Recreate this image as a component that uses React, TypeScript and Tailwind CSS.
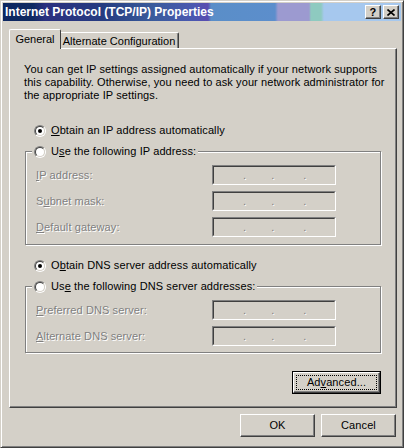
import type { ReactNode } from "react";

const Radio = ({ checked }: { checked?: boolean }) => (
  <span className="block w-[12px] h-[12px] shrink-0 rounded-full border border-t-[#808080] border-l-[#808080] border-r-white border-b-white">
    <span className="flex w-full h-full items-center justify-center rounded-full border border-t-[#404040] border-l-[#404040] border-r-[#d4d0c8] border-b-[#d4d0c8] bg-white">
      {checked && <span className="block w-[4px] h-[4px] rounded-full bg-black" />}
    </span>
  </span>
);

const RadioRow = ({ checked, children }: { checked?: boolean; children: ReactNode }) => (
  <div className="flex h-[13px] items-center gap-[5px]">
    <Radio checked={checked} />
    <span>{children}</span>
  </div>
);

const Field = () => (
  <div className="w-[124px] h-[20px] border border-t-[#808080] border-l-[#808080] border-r-white border-b-white">
    <div className="flex h-full items-center border border-t-[#404040] border-l-[#404040] border-r-[#d4d0c8] border-b-[#d4d0c8] bg-[#d4d0c8] text-[#808080] [text-shadow:1px_1px_0_#fff]">
      <span className="w-[29px]" />
      <span>.</span>
      <span className="w-[25px]" />
      <span>.</span>
      <span className="w-[29px]" />
      <span>.</span>
    </div>
  </div>
);

const FieldRow = ({ children }: { children: ReactNode }) => (
  <div className="flex h-[20px] items-center">
    <span className="w-[176px] text-[#808080] [text-shadow:1px_1px_0_#fff]">{children}</span>
    <Field />
  </div>
);

const GroupBox = ({ legend, children, pb }: { legend: ReactNode; children: ReactNode; pb: string }) => (
  <fieldset
    className={`ml-[15px] w-[356px] border border-[#808080] shadow-[inset_1px_1px_0_#fff,1px_1px_0_#fff] pt-[7px] ${pb}`}>
    <legend className="ml-[6px] px-[2px] bg-[#d4d0c8]">
      <RadioRow>{legend}</RadioRow>
    </legend>
    <div className="flex flex-col gap-[6px] pl-[10px]">{children}</div>
  </fieldset>
);

const Button = ({ children, isDefault }: { children: ReactNode; isDefault?: boolean }) => (
  <button
    className={`h-[23px] ${isDefault ? "w-[89px] border border-black" : "w-[75px]"} bg-[#d4d0c8] p-0`}>
    <span className="flex h-full w-full border border-t-white border-l-white border-r-[#404040] border-b-[#404040] shadow-[inset_-1px_-1px_0_#808080]">
      <span
        className={`flex flex-1 items-center justify-center ${
          isDefault ? "m-[2px] border border-dotted border-black" : ""
        }`}>
        {children}
      </span>
    </span>
  </button>
);

const TitleButton = ({ children }: { children: ReactNode }) => (
  <span className="flex w-[16px] h-[14px] items-center justify-center bg-[#d4d0c8] border border-t-white border-l-white border-r-[#404040] border-b-[#404040] shadow-[inset_-1px_-1px_0_#808080]">
    {children}
  </span>
);

export default function App() {
  return (
    <div className="w-[404px] h-[448px] flex flex-col bg-[#d4d0c8] border border-[#d4d0c8] border-r-[#404040] border-b-[#404040] shadow-[inset_1px_1px_0_#fff,inset_-1px_-1px_0_#808080] p-[2px] text-[11px] leading-[13px] tracking-[0.1px] text-black font-['Liberation_Sans',Arial,sans-serif] overflow-hidden">
      {/* title bar */}
      <div className="flex h-[18px] shrink-0 items-center justify-between pl-[2px] pr-[2px] bg-[linear-gradient(90deg,#0c2660_0px,#0f2a62_30px,#2b3080_42px,#263c80_100px,#3a5c9c_150px,#4a58b0_190px,#5a4cb0_205px,#5a8ec8_208px,#5c8ecc_272px,#9c9ad0_275px,#9c9ad0_306px,#8ecac0_308px,#8ecac0_318px,#a6c8ee_321px,#a6c8ee_100%)]">
        <span className="font-bold text-white text-[12px] tracking-normal">Internet Protocol (TCP/IP) Properties</span>
        <div className="flex gap-[2px]">
          <TitleButton>
            <span className="font-bold text-[11px] leading-none">?</span>
          </TitleButton>
          <TitleButton>
            <svg width="8" height="7" viewBox="0 0 8 7">
              <path d="M0.5 0.5 L7.5 6.5 M7.5 0.5 L0.5 6.5" stroke="#000" strokeWidth="1.6" />
            </svg>
          </TitleButton>
        </div>
      </div>

      {/* tabs */}
      <div className="mt-[8px] ml-[6px] flex h-[19px] items-end tracking-normal">
        <div className="relative z-10 -mb-px flex h-[20px] w-[52px] items-start justify-center pt-[3px] bg-[#d4d0c8] border-l border-t border-l-white border-t-white border-r border-r-[#404040] rounded-t-[2px]">
          General
        </div>
        <div className="flex h-[16px] w-[118px] items-start justify-center pt-[2px] pr-[1px] border-t border-t-white border-r border-r-[#404040] shadow-[inset_-1px_0_0_#808080] rounded-tr-[2px]">
          Alternate Configuration
        </div>
      </div>

      {/* panel */}
      <div className="ml-[6px] h-[360px] w-[388px] flex flex-col border border-t-white border-l-white border-r-[#404040] border-b-[#404040] shadow-[inset_-1px_-1px_0_#808080] pt-[14px]">
        <p className="pl-[14px]">
          You can get IP settings assigned automatically if your network supports
          <br />
          this capability. Otherwise, you need to ask your network administrator for
          <br />
          the appropriate IP settings.
        </p>

        <div className="mt-[22px] ml-[24px]">
          <RadioRow checked>
            <u>O</u>btain an IP address automatically
          </RadioRow>
        </div>

        <div className="mt-[8px]">
          <GroupBox
            pb="pb-[7px]"
            legend={
              <>
                U<u>s</u>e the following IP address:
              </>
            }>
            <FieldRow>
              <u>I</u>P address:
            </FieldRow>
            <FieldRow>
              S<u>u</u>bnet mask:
            </FieldRow>
            <FieldRow>
              <u>D</u>efault gateway:
            </FieldRow>
          </GroupBox>
        </div>

        <div className="mt-[14px] ml-[24px]">
          <RadioRow checked>
            O<u>b</u>tain DNS server address automatically
          </RadioRow>
        </div>

        <div className="mt-[8px]">
          <GroupBox
            pb="pb-[6px]"
            legend={
              <>
                Us<u>e</u> the following DNS server addresses:
              </>
            }>
            <FieldRow>
              <u>P</u>referred DNS server:
            </FieldRow>
            <FieldRow>
              <u>A</u>lternate DNS server:
            </FieldRow>
          </GroupBox>
        </div>

        <div className="mt-[18px] ml-[15px] flex w-[356px] justify-end">
          <Button isDefault>
            Ad<u>v</u>anced...
          </Button>
        </div>
      </div>

      {/* bottom buttons */}
      <div className="mt-[6px] flex justify-end gap-[6px] pr-[5px]">
        <Button>OK</Button>
        <Button>Cancel</Button>
      </div>
    </div>
  );
}
